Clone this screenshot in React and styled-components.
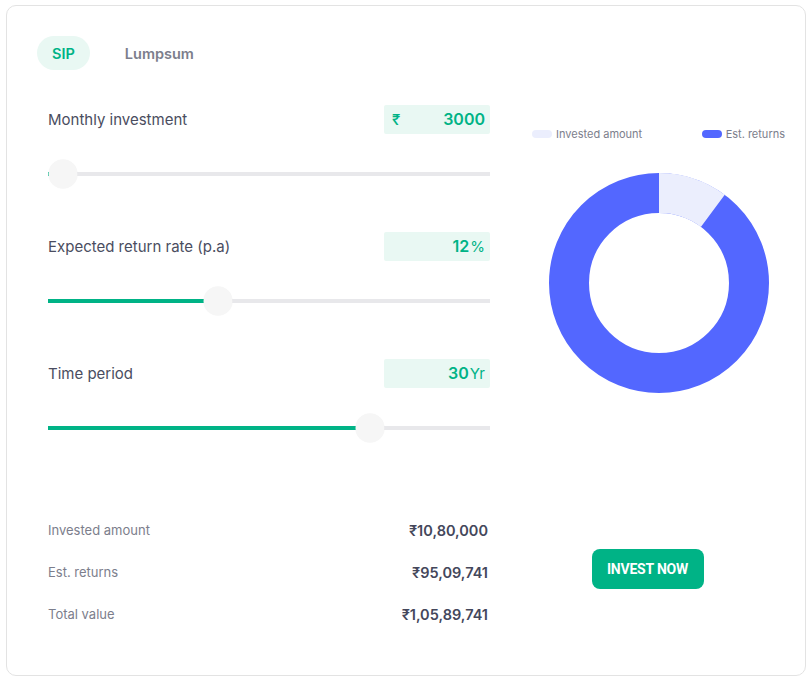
import React from 'react'
import styled, { createGlobalStyle } from 'styled-components';

const GlobalStyle = createGlobalStyle`
  * { box-sizing: border-box; }
  body {
    margin: 0;
    background: #fff;
    font-family: Inter, "Noto Sans", sans-serif;
    color: #44475b;
  }
`;

// fill and thumb are in px along a 442px track
const fields = [
  { label: 'Monthly investment', prefix: '₹', value: '3000', suffix: '', fill: 2, thumb: 14.5 },
  { label: 'Expected return rate (p.a)', prefix: '', value: '12', suffix: '%', fill: 157, thumb: 170 },
  { label: 'Time period', prefix: '', value: '30', suffix: 'Yr', fill: 308, thumb: 322 },
];

const results = [
  { label: 'Invested amount', value: '₹10,80,000' },
  { label: 'Est. returns', value: '₹95,09,741' },
  { label: 'Total value', value: '₹1,05,89,741' },
];

function Donut() {
  const cx = 110, cy = 110, r = 90;
  const frac = 1080000 / 10589741;
  const a = frac * 2 * Math.PI;
  const x = cx + r * Math.sin(a);
  const y = cy - r * Math.cos(a);
  return (
    <svg width="220" height="220" viewBox="0 0 220 220">
      <circle cx={cx} cy={cy} r={r} fill="none" stroke="#5367ff" strokeWidth="40" />
      <path
        d={`M ${cx} ${cy - r} A ${r} ${r} 0 0 1 ${x} ${y}`}
        fill="none"
        stroke="#ebeefd"
        strokeWidth="40"
      />
    </svg>
  );
}

function App() {
  return (
    <>
      <GlobalStyle />
      <Card>
        <Tabs>
          <Tab active>SIP</Tab>
          <Tab>Lumpsum</Tab>
        </Tabs>
        <Body>
          <Left>
            {fields.map((f) => (
              <Field key={f.label}>
                <FieldHead>
                  <Label>{f.label}</Label>
                  <ValueBox>
                    {f.prefix && <Prefix>{f.prefix}</Prefix>}
                    <Value>{f.value}</Value>
                    {f.suffix && <Suffix>{f.suffix}</Suffix>}
                  </ValueBox>
                </FieldHead>
                <Track>
                  <Fill style={{ width: `${f.fill}px` }} />
                  <Thumb style={{ left: `${f.thumb}px` }} />
                </Track>
              </Field>
            ))}
            <Results>
              {results.map((r) => (
                <ResultRow key={r.label}>
                  <ResultLabel>{r.label}</ResultLabel>
                  <ResultValue>{r.value}</ResultValue>
                </ResultRow>
              ))}
            </Results>
          </Left>
          <Right>
            <Legend>
              <LegendItem>
                <Swatch color="#ebeefd" />
                Invested amount
              </LegendItem>
              <LegendItem>
                <Swatch color="#5367ff" />
                Est. returns
              </LegendItem>
            </Legend>
            <ChartWrap>
              <Donut />
            </ChartWrap>
            <InvestButton>INVEST NOW</InvestButton>
          </Right>
        </Body>
      </Card>
    </>
  );
}

const Card = styled.div`
  margin: 5px 6px 0;
  width: 800px;
  height: 671px;
  border: 1px solid #e3e3e3;
  border-radius: 10px;
  padding: 30px 0 0 30px;
`;

const Tabs = styled.div`
  display: flex;
  align-items: center;
  gap: 13px;
`;

const Tab = styled.div`
  height: 34px;
  padding: 0 ${(p) => (p.active ? '15px' : '22px')};
  border-radius: 17px;
  display: flex;
  align-items: center;
  font-size: 14.5px;
  font-weight: 600;
  color: ${(p) => (p.active ? '#00b386' : '#7c7e8c')};
  background: ${(p) => (p.active ? '#e9f8f3' : 'transparent')};
`;

const Body = styled.div`
  display: flex;
  padding-left: 11px;
  margin-top: 34px;
`;

const Left = styled.div`
  width: 442px;
  display: flex;
  flex-direction: column;
`;

const Field = styled.div`
  height: 127px;
`;

const FieldHead = styled.div`
  display: flex;
  justify-content: space-between;
  align-items: center;
  height: 30px;
`;

const Label = styled.div`
  font-size: 15px;
  color: #4a4d60;
`;

const ValueBox = styled.div`
  width: 106px;
  height: 29px;
  background: #e9f8f3;
  border-radius: 2px;
  display: flex;
  align-items: center;
  justify-content: flex-end;
  padding: 0 5px 0 8px;
  color: #00b386;
  font-weight: 500;
`;

const Prefix = styled.span`
  font-size: 15px;
  margin-right: auto;
`;

const Value = styled.span`
  font-size: 16px;
  font-weight: 600;
`;

const Suffix = styled.span`
  font-size: 15px;
  font-weight: 400;
  margin-left: 1px;
`;

const Track = styled.div`
  position: relative;
  height: 4px;
  margin-top: 37.5px;
  background: #e8e8eb;
`;

const Fill = styled.div`
  height: 100%;
  background: #00b386;
`;

const Thumb = styled.div`
  position: absolute;
  top: 50%;
  width: 29px;
  height: 29px;
  border-radius: 50%;
  background: #f6f6f6;
  transform: translate(-50%, -50%);
  box-shadow: 0 0 1px rgba(0, 0, 0, 0.05);
`;

const Results = styled.div`
  margin-top: 35px;
  display: flex;
  flex-direction: column;
  gap: 22px;
`;

const ResultRow = styled.div`
  display: flex;
  justify-content: space-between;
  align-items: center;
  height: 20px;
  padding-right: 2px;
`;

const ResultLabel = styled.div`
  font-size: 13px;
  color: #7c7e8c;
`;

const ResultValue = styled.div`
  font-size: 14.5px;
  font-weight: 600;
  color: #44475b;
`;

const Right = styled.div`
  width: 253px;
  margin-left: 42px;
  display: flex;
  flex-direction: column;
  align-items: center;
`;

const Legend = styled.div`
  width: 100%;
  display: flex;
  justify-content: space-between;
  margin-top: 23px;
`;

const LegendItem = styled.div`
  display: flex;
  align-items: center;
  gap: 4px;
  font-size: 11px;
  color: #7c7e8c;
`;

const Swatch = styled.span`
  width: 20px;
  height: 8px;
  border-radius: 4px;
  background: ${(p) => p.color};
`;

const ChartWrap = styled.div`
  margin-top: 32px;
`;

const InvestButton = styled.button`
  margin-top: 152px;
  margin-right: 22px;
  width: 112px;
  height: 40px;
  border: none;
  border-radius: 8px;
  background: #00b386;
  color: #fff;
  font-family: Roboto, Inter, sans-serif;
  font-size: 14px;
  font-weight: 700;
  letter-spacing: -0.2px;
`;

export default App;
